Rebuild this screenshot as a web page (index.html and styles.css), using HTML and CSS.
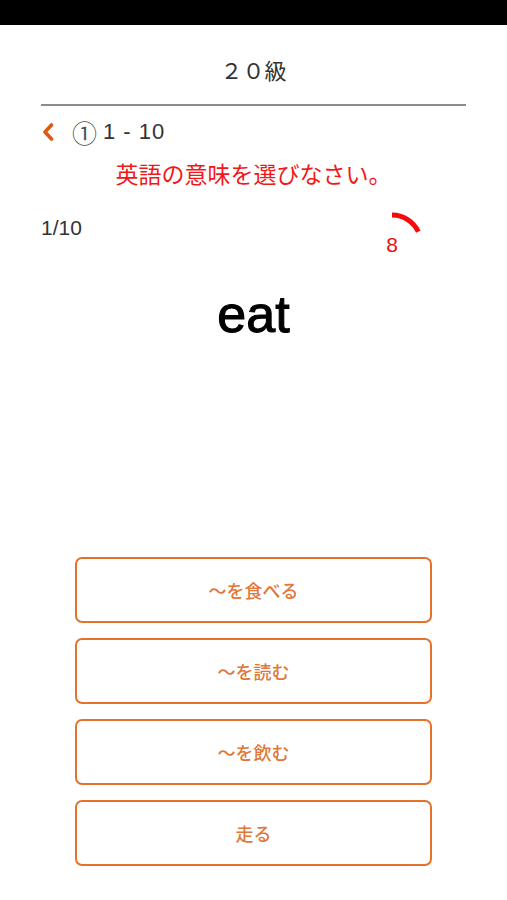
FILE: index.html
```html
<!DOCTYPE html>
<html lang="ja">
<head>
<meta charset="utf-8">
<title>20級</title>
<link rel="stylesheet" href="styles.css">
</head>
<body>
<div class="statusbar"></div>
<header class="title">２０級</header>
<div class="rule"></div>
<nav class="navrow">
  <svg class="chev" width="12" height="18" viewBox="0 0 12 18"><path d="M9.5 2 L3 9 L9.5 16" fill="none" stroke="#d85a14" stroke-width="3.6" stroke-linecap="round" stroke-linejoin="round"/></svg>
  <span class="circ">①</span><span class="range">1 - 10</span>
</nav>
<p class="instruction">英語の意味を選びなさい。</p>
<div class="statrow">
  <span class="count">1/10</span>
  <div class="timer">
    <svg class="arc" width="70" height="70" viewBox="0 0 70 70"><path d="M35 6 A29 29 0 0 1 61.3 22.7" fill="none" stroke="#f20c0c" stroke-width="5"/></svg>
    <span class="sec">8</span>
  </div>
</div>
<div class="word">eat</div>
<div class="options">
  <button class="opt">～を食べる</button>
  <button class="opt">～を読む</button>
  <button class="opt">～を飲む</button>
  <button class="opt">走る</button>
</div>
</body>
</html>
```
FILE: styles.css
```css
* { box-sizing: border-box; }
html, body { margin: 0; padding: 0; background: #fff; }
body {
  width: 507px;
  height: 900px;
  font-family: "Liberation Sans", "Noto Sans CJK JP", sans-serif;
  color: #333;
}
.statusbar { height: 25px; background: #000; }
.title {
  padding-top: 32px;
  padding-bottom: 23px;
  font-family: "Noto Sans CJK JP", sans-serif;
  font-size: 22px;
  line-height: 24px;
  text-align: center;
  color: #333;
}
.rule { margin: 0 41px; height: 2px; background: #8c8c8c; }
.navrow {
  display: flex;
  align-items: center;
  margin-top: 14px;
  height: 24px;
  padding-left: 42px;
}
.chev { display: block; }
.circ {
  margin-left: 18px;
  font-family: "Noto Sans CJK JP", sans-serif;
  font-size: 25px;
  line-height: 24px;
  color: #555;
}
.range {
  margin-left: 6px;
  font-size: 22px;
  letter-spacing: 1px;
  line-height: 24px;
  color: #333;
}
.instruction {
  margin: 17px 0 0;
  font-family: "Noto Sans CJK JP", sans-serif;
  font-size: 23px;
  line-height: 24px;
  text-align: center;
  color: #f01818;
}
.statrow {
  display: flex;
  justify-content: space-between;
  align-items: flex-start;
  margin-top: 24px;
  padding-left: 41px;
  padding-right: 80px;
}
.count {
  padding-top: 7px;
  font-size: 21px;
  line-height: 24px;
  color: #333;
}
.timer {
  display: grid;
  width: 70px;
  height: 70px;
}
.arc, .sec { grid-area: 1 / 1; }
.arc { display: block; }
.sec {
  align-self: center;
  justify-self: center;
  padding-top: 2px;
  font-size: 21px;
  line-height: 24px;
  color: #f20c0c;
}
.word {
  margin-top: 5px;
  font-size: 52px;
  line-height: 60px;
  text-align: center;
  color: #000;
  -webkit-text-stroke: 1.1px #000;
}
.options {
  display: flex;
  flex-direction: column;
  gap: 15px;
  margin: 213px 75px 0;
}
.opt {
  height: 66px;
  border: 2px solid #e4722a;
  border-radius: 7px;
  background: #fff;
  font-family: "Noto Sans CJK JP", sans-serif;
  font-size: 18px;
  font-weight: 500;
  color: #e0783a;
  padding: 0;
}
```
